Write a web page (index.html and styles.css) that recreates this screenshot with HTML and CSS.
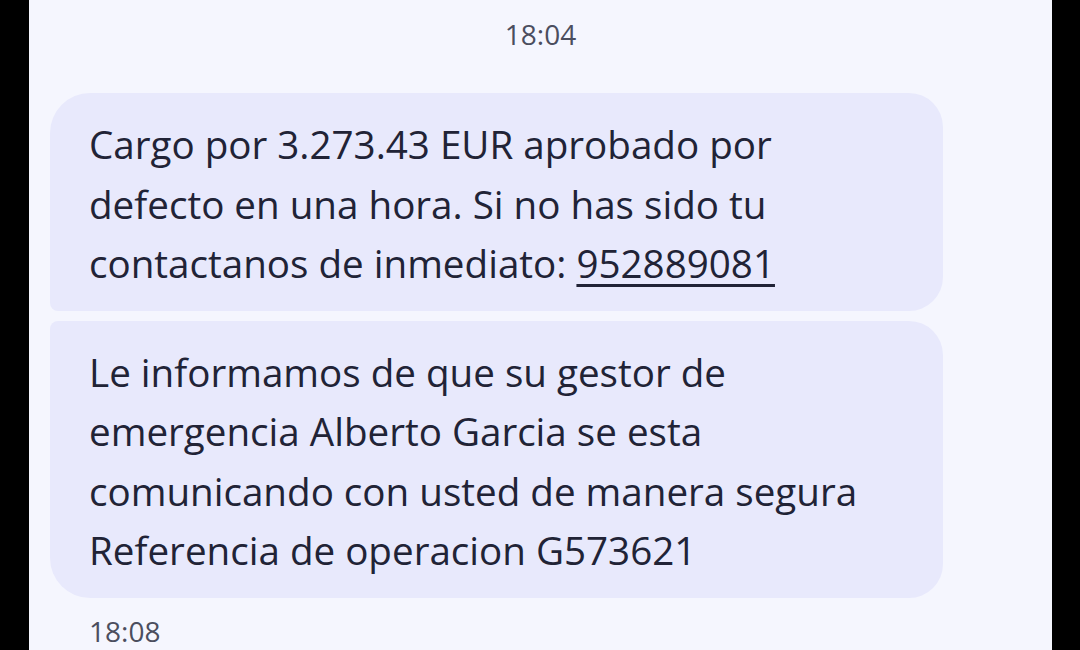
FILE: index.html
```html
<!DOCTYPE html>
<html lang="es">
<head>
    <meta charset="UTF-8">
    <meta name="viewport" content="width=device-width, initial-scale=1.0">
    <title>Mensajes</title>
    <link rel="stylesheet" href="styles.css">
</head>
<body>
    <div class="screen">
        <div class="time-center">18:04</div>

        <div class="group">
            <div class="bubble first">
                Cargo por 3.273.43 EUR aprobado por<br>
                defecto en una hora. Si no has sido tu<br>
                contactanos de inmediato: <span class="link">952889081</span>
            </div>
            <div class="bubble last">
                Le informamos de que su gestor de<br>
                emergencia Alberto Garcia se esta<br>
                comunicando con usted de manera segura<br>
                Referencia de operacion G573621
            </div>
        </div>

        <div class="time-left">18:08</div>
    </div>
</body>
</html>
```

FILE: styles.css
```css
html, body {
    margin: 0;
    padding: 0;
    background: #000;
}
body {
    width: 1080px;
    height: 650px;
    overflow: hidden;
    font-family: "Open Sans", Roboto, sans-serif;
}
.screen {
    margin: 0 28px 0 29px;
    height: 650px;
    background: #f5f6fe;
    box-sizing: border-box;
    padding-top: 16px;
}
.time-center {
    text-align: center;
    font-size: 28px;
    color: #4b4e5e;
    line-height: 36px;
}
.group {
    display: flex;
    flex-direction: column;
    gap: 10px;
    margin: 41px 0 0 21px;
    width: 893px;
}
.bubble {
    background: #e8e9fc;
    color: #212336;
    font-size: 38.6px;
    line-height: 59.5px;
    padding: 22px 20px 17px 39px;
    border-radius: 8px 34px 34px 8px;
    white-space: nowrap;
}
.bubble.first {
    border-top-left-radius: 40px;
}
.bubble.last {
    border-bottom-left-radius: 40px;
}
.link {
    text-decoration: underline;
    text-decoration-thickness: 3px;
    text-underline-offset: 6px;
}
.time-left {
    margin: 15px 0 0 60px;
    font-size: 28px;
    color: #4b4e5e;
    line-height: 36px;
}
```
